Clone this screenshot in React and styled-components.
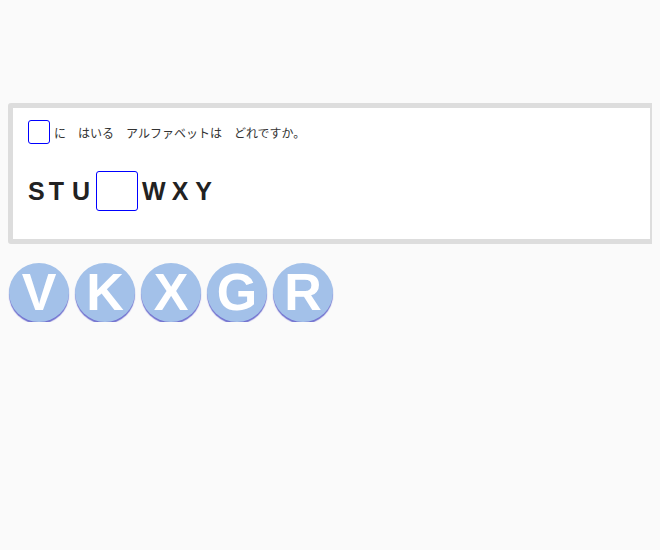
import React from "react";
import styled, { createGlobalStyle } from "styled-components";

const GlobalStyle = createGlobalStyle`
  body {
    margin: 8px;
    background: #fafafa;
    font-family: "Liberation Sans", "Noto Sans CJK JP", sans-serif;
  }
`;

const Page = styled.div`
  padding-top: 95px;
`;

const Card = styled.div`
  box-sizing: border-box;
  width: 647px;
  height: 141px;
  background: #fff;
  border: 5px solid #dddddd;
  border-radius: 3px;
  padding: 12px 15px 0;
`;

const Question = styled.div`
  display: flex;
  align-items: center;
  gap: 4px;
  font-size: 12px;
  color: #333;
  font-family: "Noto Sans CJK JP", sans-serif;
`;

const Blank = styled.span`
  box-sizing: border-box;
  display: inline-block;
  width: ${(p) => (p.big ? "42px" : "22px")};
  height: ${(p) => (p.big ? "40px" : "24px")};
  border: 1px solid #0000ff;
  border-radius: 3px;
`;

const Sequence = styled.div`
  display: flex;
  align-items: center;
  margin-top: 27px;
  font-size: 25px;
  font-weight: bold;
  color: #222;
`;

const Letter = styled.span`
  margin-right: ${(p) => p.gap}px;
`;

const Choices = styled.div`
  display: flex;
  gap: 6px;
  margin-top: 19px;
  padding-left: 1px;
`;

const Choice = styled.button`
  width: 60px;
  height: 59px;
  border: none;
  border-radius: 50%;
  padding: 0;
  background: #a3c1e9;
  box-shadow: 0 2px 1px rgba(90, 90, 200, 0.85);
  color: #fff;
  font-family: "Liberation Sans", sans-serif;
  font-weight: bold;
  font-size: 52px;
  line-height: 59px;
  text-align: center;
  cursor: pointer;
`;

const before = [
  ["S", 4],
  ["T", 8],
  ["U", 6],
];
const after = [
  ["W", 6],
  ["X", 7],
  ["Y", 0],
];

export default function App() {
  return (
    <Page>
      <GlobalStyle />
      <Card>
        <Question>
          <Blank />
          <span>に　はいる　アルファベットは　どれですか。</span>
        </Question>
        <Sequence>
          {before.map(([c, g]) => (
            <Letter key={c} gap={g}>
              {c}
            </Letter>
          ))}
          <Blank big />
          <Letter gap={4} />
          {after.map(([c, g]) => (
            <Letter key={c} gap={g}>
              {c}
            </Letter>
          ))}
        </Sequence>
      </Card>
      <Choices>
        {["V", "K", "X", "G", "R"].map((c) => (
          <Choice key={c}>{c}</Choice>
        ))}
      </Choices>
    </Page>
  );
}
